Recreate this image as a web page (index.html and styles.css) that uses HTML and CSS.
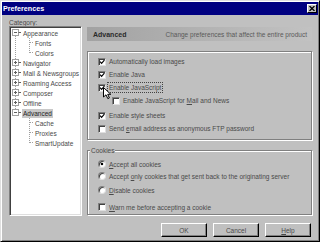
FILE: index.html
```html
<!DOCTYPE html>
<html lang="en">
<head>
<meta charset="UTF-8">
<title>Preferences</title>
<link rel="stylesheet" href="styles.css">
</head>
<body>
<div class="window">
  <div class="titlebar">
    <span class="title">Preferences</span>
    <span class="close-btn">
      <svg width="6" height="5" viewBox="0 0 6 5"><path d="M0.5 0 L5.5 5 M5.5 0 L0.5 5" stroke="#000" stroke-width="1.3"/></svg>
    </span>
  </div>

  <div class="main">
    <div class="sidebar">
      <div class="caption"><u>C</u>ategory:</div>
      <div class="tree">
        <div class="node">
          <svg width="11" height="10" viewBox="0 0 11 10"><path d="M4.5 8 V10" stroke="#a0a0a0" stroke-dasharray="1 1"/><rect x="1.5" y="1.5" width="6" height="6" fill="#fff" stroke="#a0a0a0"/><path d="M3 4.5 H6 M7.5 4.5 H10" stroke="#606060"/></svg>
          <span class="text">Appearance</span>
        </div>
        <div class="node">
          <svg width="23" height="10" viewBox="0 0 23 10"><path d="M4.5 0 V10 M18.5 0 V10 M19 4.5 H23" stroke="#a0a0a0" stroke-dasharray="1 1"/></svg>
          <span class="text">Fonts</span>
        </div>
        <div class="node">
          <svg width="23" height="10" viewBox="0 0 23 10"><path d="M4.5 0 V10 M18.5 0 V5 M19 4.5 H23" stroke="#a0a0a0" stroke-dasharray="1 1"/></svg>
          <span class="text">Colors</span>
        </div>
        <div class="node">
          <svg width="11" height="10" viewBox="0 0 11 10"><path d="M4.5 0 V10" stroke="#a0a0a0" stroke-dasharray="1 1"/><rect x="1.5" y="1.5" width="6" height="6" fill="#fff" stroke="#a0a0a0"/><path d="M3 4.5 H6 M4.5 3 V6 M7.5 4.5 H10" stroke="#606060"/></svg>
          <span class="text">Navigator</span>
        </div>
        <div class="node">
          <svg width="11" height="10" viewBox="0 0 11 10"><path d="M4.5 0 V10" stroke="#a0a0a0" stroke-dasharray="1 1"/><rect x="1.5" y="1.5" width="6" height="6" fill="#fff" stroke="#a0a0a0"/><path d="M3 4.5 H6 M4.5 3 V6 M7.5 4.5 H10" stroke="#606060"/></svg>
          <span class="text">Mail &amp; Newsgroups</span>
        </div>
        <div class="node">
          <svg width="11" height="10" viewBox="0 0 11 10"><path d="M4.5 0 V10" stroke="#a0a0a0" stroke-dasharray="1 1"/><rect x="1.5" y="1.5" width="6" height="6" fill="#fff" stroke="#a0a0a0"/><path d="M3 4.5 H6 M4.5 3 V6 M7.5 4.5 H10" stroke="#606060"/></svg>
          <span class="text">Roaming Access</span>
        </div>
        <div class="node">
          <svg width="11" height="10" viewBox="0 0 11 10"><path d="M4.5 0 V10" stroke="#a0a0a0" stroke-dasharray="1 1"/><rect x="1.5" y="1.5" width="6" height="6" fill="#fff" stroke="#a0a0a0"/><path d="M3 4.5 H6 M4.5 3 V6 M7.5 4.5 H10" stroke="#606060"/></svg>
          <span class="text">Composer</span>
        </div>
        <div class="node">
          <svg width="11" height="10" viewBox="0 0 11 10"><path d="M4.5 0 V10" stroke="#a0a0a0" stroke-dasharray="1 1"/><rect x="1.5" y="1.5" width="6" height="6" fill="#fff" stroke="#a0a0a0"/><path d="M3 4.5 H6 M4.5 3 V6 M7.5 4.5 H10" stroke="#606060"/></svg>
          <span class="text">Offline</span>
        </div>
        <div class="node selected">
          <svg width="11" height="10" viewBox="0 0 11 10"><path d="M4.5 0 V2" stroke="#a0a0a0" stroke-dasharray="1 1"/><rect x="1.5" y="1.5" width="6" height="6" fill="#fff" stroke="#a0a0a0"/><path d="M3 4.5 H6 M7.5 4.5 H10" stroke="#606060"/></svg>
          <span class="text">Advanced</span>
        </div>
        <div class="node">
          <svg width="23" height="10" viewBox="0 0 23 10"><path d="M18.5 0 V10 M19 4.5 H23" stroke="#a0a0a0" stroke-dasharray="1 1"/></svg>
          <span class="text">Cache</span>
        </div>
        <div class="node">
          <svg width="23" height="10" viewBox="0 0 23 10"><path d="M18.5 0 V10 M19 4.5 H23" stroke="#a0a0a0" stroke-dasharray="1 1"/></svg>
          <span class="text">Proxies</span>
        </div>
        <div class="node">
          <svg width="23" height="10" viewBox="0 0 23 10"><path d="M18.5 0 V5 M19 4.5 H23" stroke="#a0a0a0" stroke-dasharray="1 1"/></svg>
          <span class="text">SmartUpdate</span>
        </div>
      </div>
    </div>

    <div class="panel">
      <div class="panel-header">
        <span class="panel-name">Advanced</span>
        <span class="panel-desc">Change preferences that affect the entire product</span>
      </div>

      <div class="group general">
        <div class="option"><span class="check on"></span><span class="label">Automatically load images</span></div>
        <div class="option"><span class="check on"></span><span class="label">Enable Java</span></div>
        <div class="option"><span class="check on"></span><span class="label focus">Enable JavaScript</span></div>
        <div class="option sub"><span class="check"></span><span class="label">Enable JavaScript for <u>M</u>ail and News</span></div>
        <div class="option spaced"><span class="check on"></span><span class="label">Enable style sheets</span></div>
        <div class="option"><span class="check"></span><span class="label">Send <u>e</u>mail address as anonymous FTP password</span></div>

        <svg class="pointer" width="9" height="13" viewBox="0 0 9 13"><path d="M0.5 0.5 V10 L3 7.8 L4.8 11.6 L6.4 10.9 L4.7 7.3 H7.8 Z" fill="#fff" stroke="#000"/></svg>
      </div>

      <div class="group cookies">
        <span class="group-title">Cookies</span>
        <div class="option"><span class="radio on"></span><span class="label"><u>A</u>ccept all cookies</span></div>
        <div class="option"><span class="radio"></span><span class="label">Accept <u>o</u>nly cookies that get sent back to the originating server</span></div>
        <div class="option spaced"><span class="radio"></span><span class="label"><u>D</u>isable cookies</span></div>
        <div class="option warn"><span class="check"></span><span class="label"><u>W</u>arn me before accepting a cookie</span></div>
      </div>
    </div>
  </div>

  <div class="buttons">
    <span class="btn">OK</span>
    <span class="btn">Cancel</span>
    <span class="btn"><u>H</u>elp</span>
  </div>
</div>
</body>
</html>
```

FILE: styles.css
```css
* {
  box-sizing: border-box;
}

body {
  margin: 0;
  background: #c0c0c0;
  font-family: "Liberation Sans", Arial, sans-serif;
  font-size: 6.5px;
  color: #4a4a4a;
}

u {
  text-decoration: underline;
  text-underline-offset: 1px;
}

.window {
  width: 320px;
  height: 242px;
  padding: 1px;
  border: 1px solid;
  border-color: #dfdfdf #000 #000 #dfdfdf;
  box-shadow: inset 1px 1px #fff, inset -1px -1px #808080;
  display: flex;
  flex-direction: column;
}

/* title bar */
.titlebar {
  height: 13px;
  flex: none;
  background: #000080;
  color: #fff;
  display: flex;
  align-items: center;
  justify-content: space-between;
  padding: 0 1px;
}

.title {
  font-weight: bold;
  font-size: 7.2px;
}

.close-btn {
  width: 10px;
  height: 9px;
  background: #c0c0c0;
  border: 1px solid;
  border-color: #fff #000 #000 #fff;
  display: flex;
  align-items: center;
  justify-content: center;
}

.close-btn svg {
  display: block;
}

/* body of the dialog */
.main {
  height: 201px;
  flex: none;
  display: flex;
  gap: 5px;
  padding: 4px 6px 0 7px;
}

.sidebar {
  width: 73px;
  display: flex;
  flex-direction: column;
}

.caption {
  height: 7px;
  line-height: 7px;
}

.tree {
  height: 190px;
  background: #fff;
  border: 1px solid;
  border-color: #808080 #fff #fff #808080;
  box-shadow: inset 1px 1px #404040, inset -1px -1px #dfdfdf;
  padding: 1px;
}

.node {
  height: 10px;
  display: flex;
  align-items: center;
  white-space: nowrap;
}

.node svg {
  flex: none;
  display: block;
}

.node .text {
  padding: 0 1px;
  line-height: 9px;
}

.node.selected .text {
  background: #c8c8c8;
  color: #222;
}

.panel {
  width: 225px;
  display: flex;
  flex-direction: column;
}

.panel-header {
  margin-top: 8px;
  height: 14px;
  display: flex;
  align-items: center;
  justify-content: space-between;
  padding: 0 5px 0 6px;
  background: linear-gradient(to right, #a2a2a2, #c2c2c2);
  color: #5a5a5a;
}

.panel-name {
  font-weight: bold;
  font-size: 7px;
  color: #2a2a2a;
}

/* group boxes */
.group {
  position: relative;
  border: 1px solid #808080;
  box-shadow: inset 1px 1px #fff, 1px 1px #fff;
  padding-left: 10px;
}

.general {
  margin-top: 10px;
  height: 89px;
  padding-top: 3px;
}

.cookies {
  margin-top: 10px;
  height: 65px;
  padding-top: 7px;
}

.group-title {
  position: absolute;
  top: -4px;
  left: 2px;
  padding: 0 1px;
  line-height: 7px;
  background: #c0c0c0;
}

.option {
  height: 13px;
  display: flex;
  align-items: center;
  white-space: nowrap;
}

.cookies .option {
  height: 12px;
}

.option.sub {
  padding-left: 14px;
}

.general .option.spaced {
  margin-top: 2px;
}

.cookies .option.spaced {
  margin-top: 2px;
}

.cookies .option.warn {
  margin-top: 5px;
}

.label {
  margin-left: 3px;
  line-height: 9px;
}

.label.focus {
  margin-left: 2px;
  padding: 0 1px;
  outline: 1px dotted #444;
}

.check {
  width: 8px;
  height: 8px;
  flex: none;
  background: #fff;
  border: 1px solid;
  border-color: #808080 #dfdfdf #dfdfdf #808080;
  box-shadow: inset 1px 1px #404040;
}

.check.on {
  background: #fff url("data:image/svg+xml,%3Csvg xmlns='http://www.w3.org/2000/svg' width='6' height='6'%3E%3Cpath d='M1 2.6 L2.6 4.3 L5.4 1.2' fill='none' stroke='%23000' stroke-width='1.2'/%3E%3C/svg%3E") no-repeat center;
}

.radio {
  width: 8px;
  height: 8px;
  flex: none;
  border-radius: 50%;
  background: #fff;
  border: 1px solid;
  border-color: #808080 #dfdfdf #dfdfdf #808080;
  box-shadow: inset 1px 1px #404040;
}

.radio.on {
  background: radial-gradient(circle, #000 0 1.4px, #fff 1.6px);
}

.pointer {
  position: absolute;
  left: 15px;
  top: 35px;
}

/* buttons */
.buttons {
  display: flex;
  justify-content: flex-end;
  gap: 6px;
  padding: 7px 7px 0 0;
}

.btn {
  width: 46px;
  height: 14px;
  display: flex;
  align-items: center;
  justify-content: center;
  background: #c0c0c0;
  border: 1px solid;
  border-color: #fff #000 #000 #fff;
  box-shadow: inset -1px -1px #808080;
}
```
